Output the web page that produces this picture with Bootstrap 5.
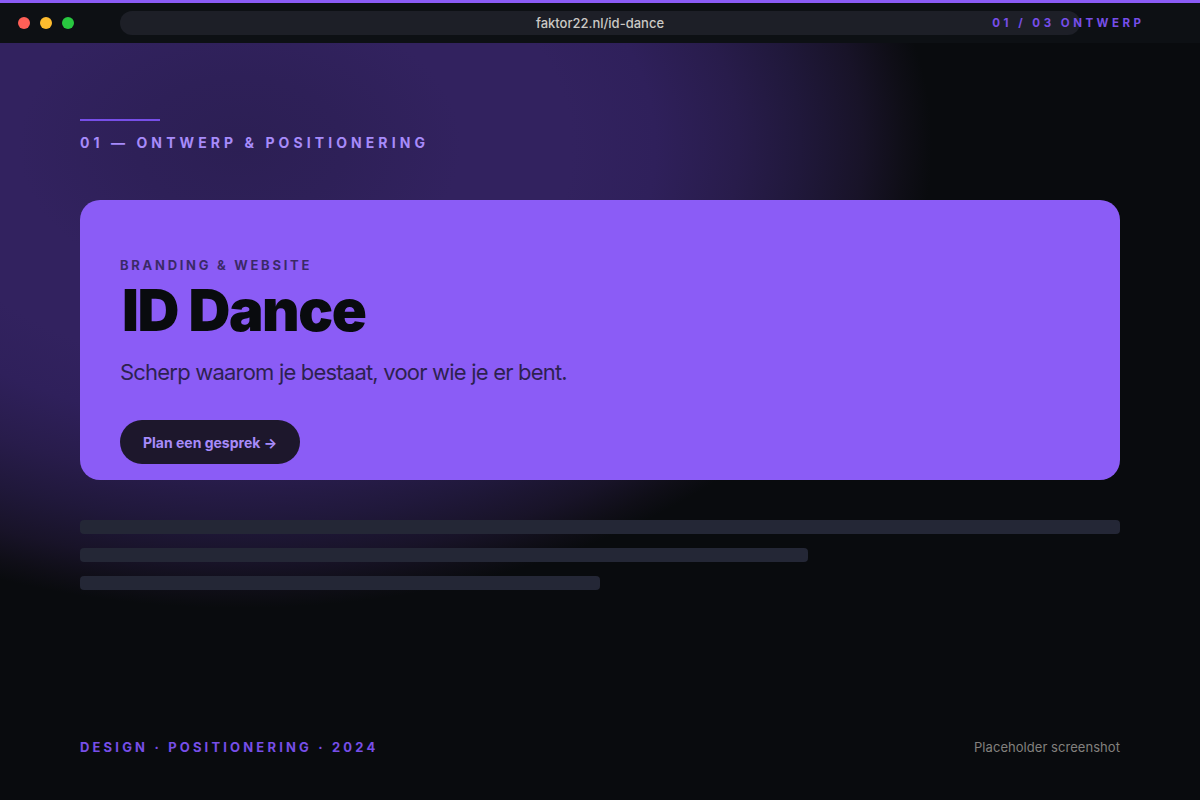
<!DOCTYPE html>
<html lang="nl">
<head>
<meta charset="utf-8">
<meta name="viewport" content="width=device-width, initial-scale=1">
<title>ID Dance</title>
<link rel="stylesheet" href="https://cdn.jsdelivr.net/npm/bootstrap@5.3.0/dist/css/bootstrap.min.css">
<style>
:root{--ink:#090b0e;--brand:#8b5cf6;--brand-deep:#774ee8;--brand-soft:#a78bfa}
body{font-family:Inter,sans-serif;line-height:1;background:var(--ink)}
.page{height:800px;overflow:hidden;background:radial-gradient(ellipse 692px 462px at 240px 146px,#2c1f54 0%,#2e2058 15%,#32225f 32%,#32225f 48%,#2f205b 60%,#281c4b 72%,#20183b 81%,#181328 90%,#0f0e17 96%,#090b0e 100%)}
.accent{height:3px;background:var(--brand)}
.chrome{height:40px;background:#0d1014;padding:0 18px}
.dots{gap:10px}
.dot{width:12px;height:12px}
.dot-close{background:#ff5f57}
.dot-min{background:#febc2e}
.dot-max{background:#28c840}
.address{width:960px;height:24px;margin-left:46px;background:#1d1f27;color:#cbc9c5;font-size:13px;font-weight:480}
.step{right:55.5px;top:18px;font-size:11.5px;font-weight:650;letter-spacing:3.5px;color:var(--brand-deep)}
.content{padding:76px 80px 46px}
.rule{width:80px;height:2px;background:var(--brand-deep)}
.kicker{margin-top:15px;font-size:14px;font-weight:650;letter-spacing:4.08px;color:var(--brand-soft)}
.hero{height:280px;margin-top:50px;padding:59px 40px 0;border-radius:20px;background:var(--brand);color:var(--ink)}
.eyebrow{font-size:13px;font-weight:650;letter-spacing:2.72px;opacity:.62}
.hero h1{font-size:58px;font-weight:900;line-height:56px;letter-spacing:-1.45px;word-spacing:.5px;margin:10px 0 0 2px}
.tagline{font-size:22px;font-weight:420;letter-spacing:-.8px;margin:23px 0 0;opacity:.72}
.cta{width:180px;height:44px;margin-top:37px;padding-top:2px;background:#1d172c;color:var(--brand-soft);font-size:14px;font-weight:700}
.bars{margin-top:40px;gap:14px}
.bar{height:14px;border-radius:4px;background:#242736}
.tags{font-size:13px;font-weight:650;letter-spacing:3.17px;color:var(--brand-deep)}
.note{font-size:13px;letter-spacing:.05px;color:#83817e}
</style>
<script src="https://cdn.jsdelivr.net/npm/bootstrap@5.3.0/dist/js/bootstrap.bundle.min.js"></script>
</head>
<body>
<div class="page d-flex flex-column">
  <div class="accent flex-shrink-0"></div>
  <header class="chrome d-flex align-items-center flex-shrink-0">
    <div class="dots d-flex">
      <span class="dot dot-close rounded-circle"></span>
      <span class="dot dot-min rounded-circle"></span>
      <span class="dot dot-max rounded-circle"></span>
    </div>
    <div class="address rounded-pill d-flex align-items-center justify-content-center">faktor22.nl/id-dance</div>
    <div class="step position-absolute">01 / 03 ONTWERP</div>
  </header>
  <main class="content d-flex flex-column flex-grow-1">
    <div class="rule"></div>
    <div class="kicker">01 — ONTWERP &amp; POSITIONERING</div>
    <section class="hero">
      <div class="eyebrow">BRANDING &amp; WEBSITE</div>
      <h1>ID Dance</h1>
      <p class="tagline">Scherp waarom je bestaat, voor wie je er bent.</p>
      <a class="cta rounded-pill d-flex align-items-center justify-content-center text-decoration-none">Plan een gesprek →</a>
    </section>
    <div class="bars d-flex flex-column">
      <div class="bar w-100"></div>
      <div class="bar" style="width:70%"></div>
      <div class="bar w-50"></div>
    </div>
    <footer class="d-flex justify-content-between mt-auto">
      <div class="tags">DESIGN · POSITIONERING · 2024</div>
      <div class="note">Placeholder screenshot</div>
    </footer>
  </main>
</div>
</body>
</html>
